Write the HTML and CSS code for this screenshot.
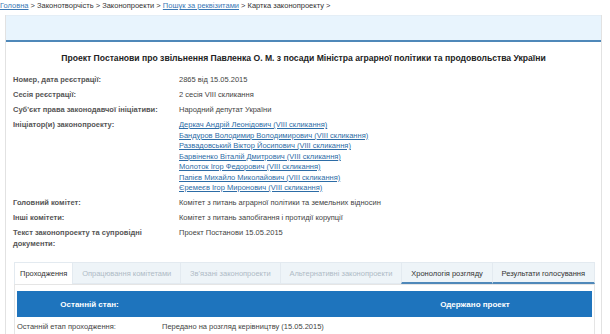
FILE: index.html
```html
<!DOCTYPE html>
<html lang="uk">
<head>
  <meta charset="UTF-8">
  <title>Картка законопроекту</title>
  <link rel="stylesheet" href="styles.css">
</head>
<body>
  <div class="crumbs">
    <a href="#">Головна</a> &gt; Законотворчість &gt; Законопроекти &gt; <a href="#">Пошук за реквізитами</a> &gt; Картка законопроекту &gt;
  </div>

  <div class="card">
    <div class="card-head"></div>

    <h1 class="title">Проект Постанови про звільнення Павленка О. М. з посади Міністра аграрної політики та продовольства України</h1>

    <div class="props">
      <div class="label">Номер, дата реєстрації:</div>
      <div class="value">2865 від 15.05.2015</div>

      <div class="label">Сесія реєстрації:</div>
      <div class="value">2 сесія VIII скликання</div>

      <div class="label">Суб'єкт права законодавчої ініціативи:</div>
      <div class="value">Народний депутат України</div>

      <div class="label">Ініціатор(и) законопроекту:</div>
      <div class="value links">
        <a href="#">Деркач Андрій Леонідович (VIII скликання)</a>
        <a href="#">Бандуров Володимир Володимирович (VIII скликання)</a>
        <a href="#">Развадовський Віктор Йосипович (VIII скликання)</a>
        <a href="#">Барвіненко Віталій Дмитрович (VIII скликання)</a>
        <a href="#">Молоток Ігор Федорович (VIII скликання)</a>
        <a href="#">Папієв Михайло Миколайович (VIII скликання)</a>
        <a href="#">Єремеєв Ігор Миронович (VIII скликання)</a>
      </div>

      <div class="label">Головний комітет:</div>
      <div class="value">Комітет з питань аграрної політики та земельних відносин</div>

      <div class="label">Інші комітети:</div>
      <div class="value">Комітет з питань запобігання і протидії корупції</div>

      <div class="label">Текст законопроекту та супровідні документи:</div>
      <div class="value">Проект Постанови 15.05.2015</div>
    </div>

    <div class="tabs">
      <div class="tab active">Проходження</div>
      <div class="tab off">Опрацювання комітетами</div>
      <div class="tab off">Зв'язані законопроекти</div>
      <div class="tab off">Альтернативні законопроекти</div>
      <div class="tab marked">Хронологія розгляду</div>
      <div class="tab marked">Результати голосування</div>
    </div>

    <div class="panel">
      <div class="state">
        <div class="state-label">Останній стан:</div>
        <div class="state-value">Одержано проект</div>
      </div>
      <div class="stage">
        <div class="stage-label">Останній етап проходження:</div>
        <div class="stage-value">Передано на розгляд керівництву (15.05.2015)</div>
      </div>
    </div>
  </div>
</body>
</html>
```

FILE: styles.css
```css
* {
  margin: 0;
  padding: 0;
  box-sizing: border-box;
}
body {
  font-family: "Liberation Sans", Arial, sans-serif;
  font-size: 7.5px;
  color: #333;
  background-color: #fff;
}
a {
  color: #2c6ca6;
}
.crumbs {
  height: 15px;
  padding-top: 1px;
  color: #333;
  white-space: nowrap;
}
.crumbs a {
  color: #3a78b5;
}
.card {
  margin: 0 8px 0 5px;
  border-left: 1px solid #e2e2e2;
  border-right: 1px solid #e2e2e2;
}
.card-head {
  height: 27px;
  background-color: #e8f4fd;
  border-top: 1px solid #e4eef6;
  border-bottom: 2px solid #4f88b9;
}
.title {
  font-size: 8.6px;
  font-weight: bold;
  color: #222;
  text-align: center;
  padding: 11px 0 12px;
}
.props {
  display: grid;
  grid-template-columns: 166px 1fr;
  row-gap: 4.5px;
  padding-left: 7px;
  line-height: 10.5px;
}
.label {
  font-weight: bold;
  color: #555;
  padding-right: 14px;
}
.value {
  color: #444;
}
.links a {
  display: block;
}
.tabs {
  display: flex;
  margin: 13px 6px 0 8px;
  height: 23px;
  border-bottom: 1px solid #e5e5e5;
}
.tab {
  flex: 1 1 auto;
  padding: 0 6px;
  line-height: 21px;
  text-align: center;
  background-color: #eef4f8;
  border: 1px solid #e3eaf0;
  border-right: none;
  color: #333;
  white-space: nowrap;
}
.tab:last-child {
  border-right: 1px solid #e3eaf0;
}
.tab.active {
  flex: none;
  padding: 0 5px;
  background-color: #fff;
  border-bottom: none;
  line-height: 22px;
}
.tab.off {
  color: #aebbc6;
}
.tab.marked {
  border-bottom: 2px solid #4f88b9;
}
.panel {
  margin: 0 6px 0 8px;
  padding: 6px 2px 2px;
  border: 1px solid #e5e5e5;
  border-top: none;
}
.state {
  display: grid;
  grid-template-columns: 145px 1fr;
  height: 26px;
  align-items: center;
  background-color: #1e74bd;
  color: #fff;
  font-weight: bold;
  font-size: 8px;
}
.state-label {
  text-align: center;
}
.state-value {
  padding-left: 196px;
  text-align: center;
}
.stage {
  display: grid;
  grid-template-columns: 145px 1fr;
  padding: 5px 0 3px;
  color: #444;
}
```
